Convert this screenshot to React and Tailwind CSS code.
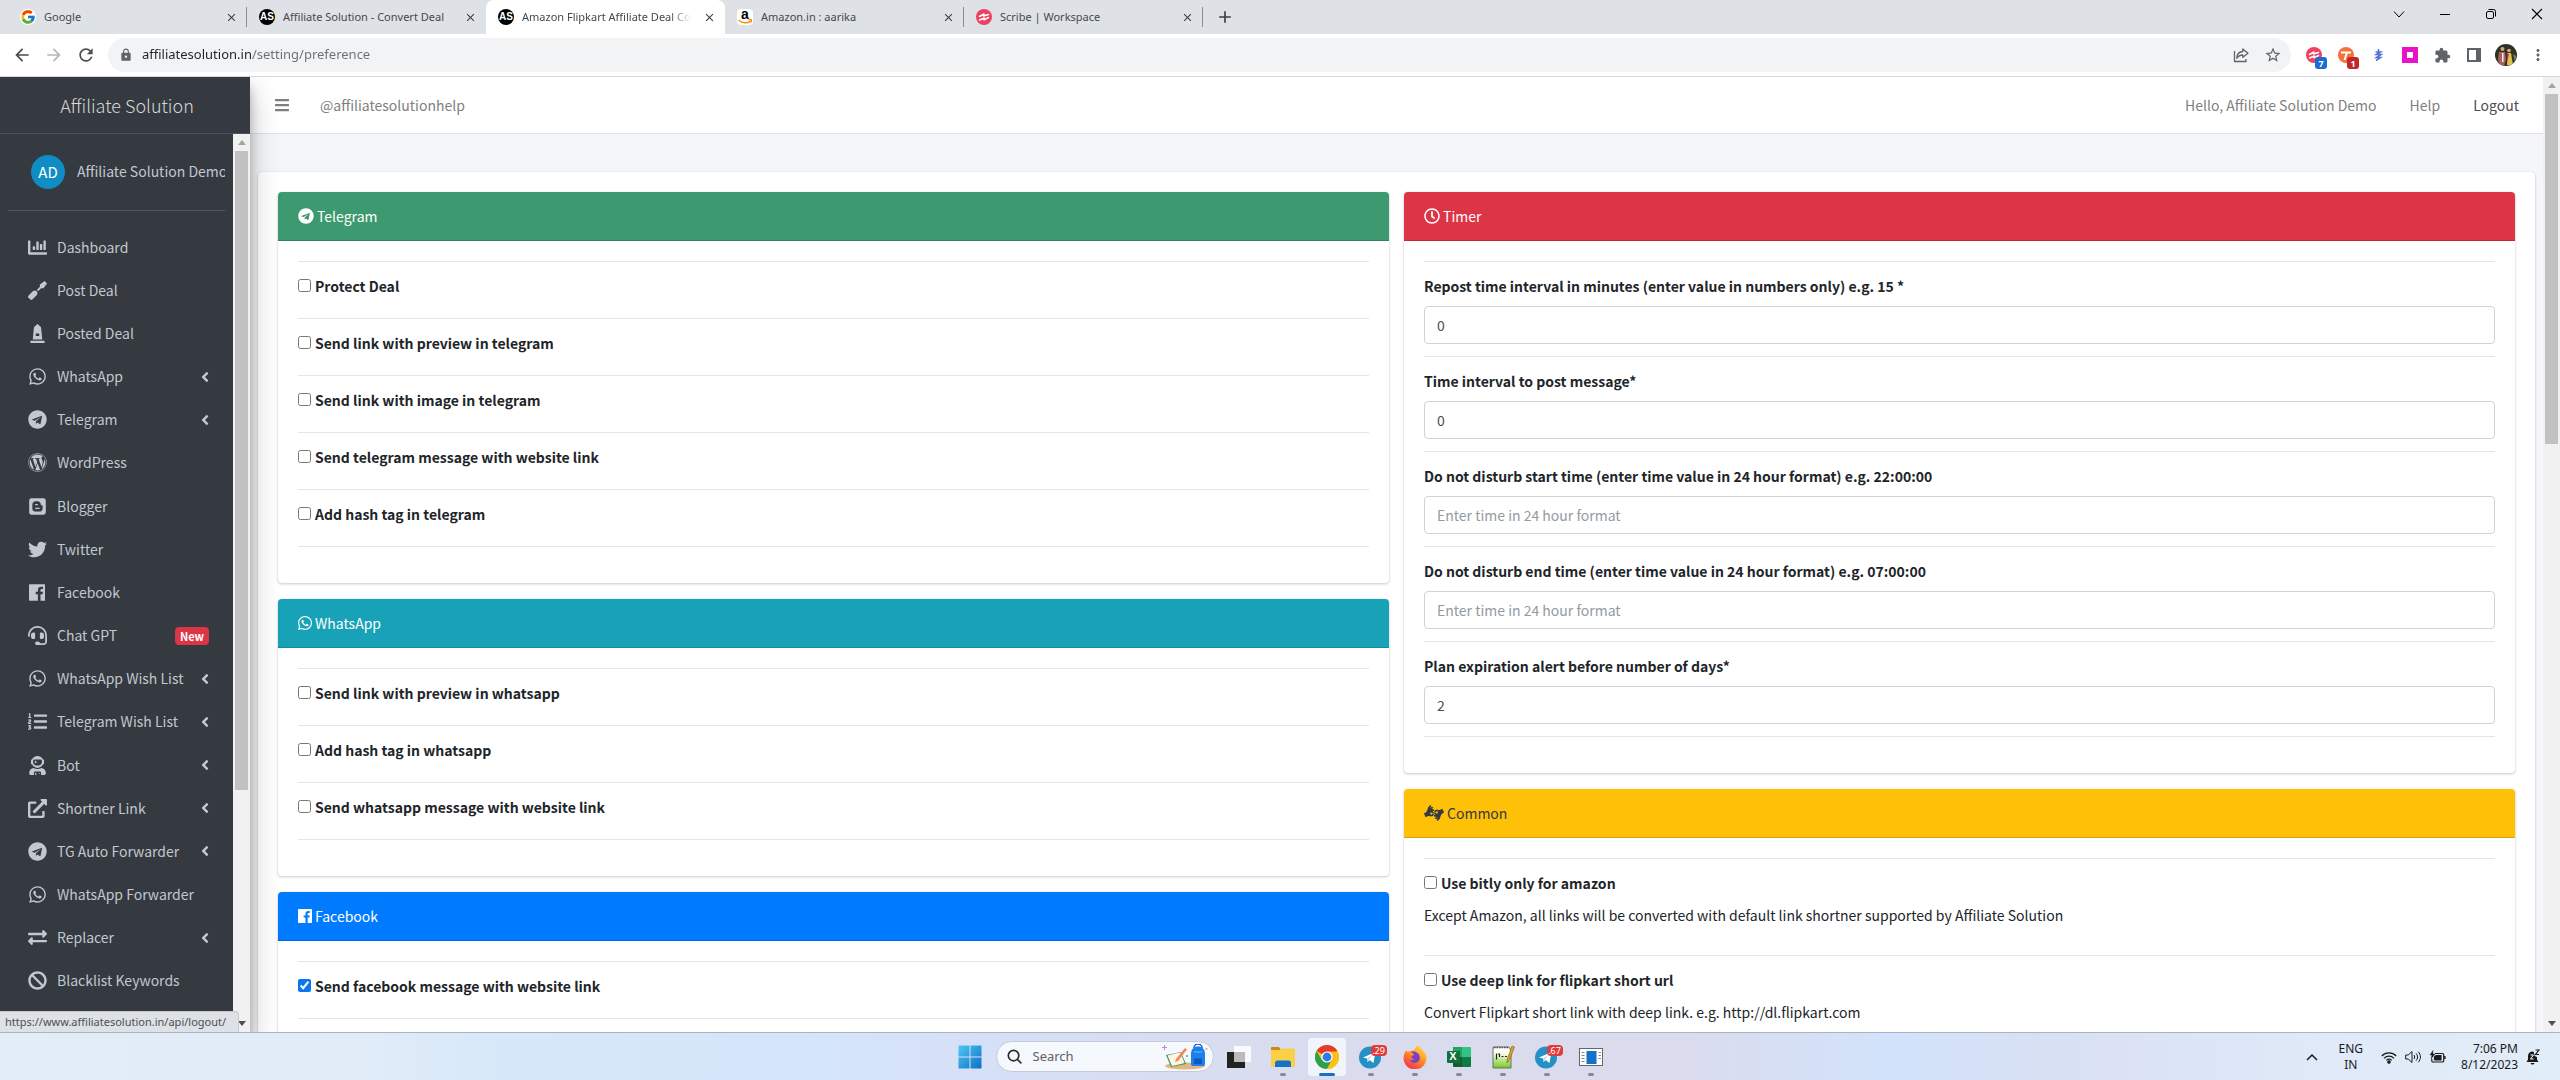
import {
  FaChartBar, FaScrewdriver, FaMonument, FaWhatsapp, FaTelegram, FaWordpress, FaBlogger, FaTwitter,
  FaListOl, FaUserAstronaut, FaExternalLinkAlt, FaExchangeAlt, FaBan, FaRegClock,
  FaAmericanSignLanguageInterpreting, FaHeadset, FaAngleLeft, FaBars,
} from "react-icons/fa";
import { FcGoogle } from "react-icons/fc";
import { MdArrowBack, MdArrowForward, MdRefresh, MdLock, MdStarBorder, MdExtension, MdMoreVert, MdClose, MdAdd } from "react-icons/md";

const UI = "font-['Noto_Sans',sans-serif]";
const PAGE = "font-['Noto_Sans_CJK_SC',sans-serif]";

/* ---------- Small drawings ---------- */

function FacebookBox({ className }) {
  return (
    <svg viewBox="0 0 448 512" fill="currentColor" className={className} aria-hidden="true">
      <path d="M448 56.7v398.5c0 13.7-11.1 24.7-24.7 24.7H309.1V306.5h58.2l8.7-67.6h-67v-43.2c0-19.6 5.4-32.9 33.5-32.9h35.8v-60.5c-6.2-.8-27.4-2.7-52.2-2.7-51.6 0-87 31.5-87 89.4v49.9h-58.4v67.6h58.4V480H24.7C11.1 480 0 468.9 0 455.3V56.7C0 43.1 11.1 32 24.7 32h398.5c13.7 0 24.8 11.1 24.8 24.7z" />
    </svg>
  );
}

function AsLogo() {
  return (
    <span className="flex size-4 items-center justify-center rounded-full bg-black font-['Liberation_Sans',sans-serif] text-[10px] leading-none font-bold text-white">
      AS
    </span>
  );
}

function AmazonLogo() {
  return (
    <span className="relative flex size-4 justify-center rounded-sm bg-white font-['Liberation_Sans',sans-serif] text-[14px] leading-[11px] font-bold text-black">
      a
      <svg viewBox="0 0 16 16" className="absolute inset-0 size-4" fill="none" stroke="#f79400" strokeWidth="1.5" strokeLinecap="round">
        <path d="M2 11.5c3.500 3 8.500 3 11.500.8M12 10.800h2.200v2" />
      </svg>
    </span>
  );
}

function ScribeLogo() {
  return (
    <svg viewBox="0 0 16 16" className="size-4" fill="none">
      <circle cx="8" cy="8" r="8" fill="#ee4060" />
      <path d="M3.500 7.500 8 5l-.5 2L12.500 5.500M3.500 11 8.300 9l-.3 1.800 4.500-2.300" stroke="#fff" strokeWidth="1.500" strokeLinecap="round" strokeLinejoin="round" />
    </svg>
  );
}

function ShareIcon() {
  return (
    <svg viewBox="0 0 16 16" className="size-4" fill="none" stroke="#5f6368" strokeWidth="1.300" strokeLinejoin="round">
      <path d="M1.500 4v10.500h11.500V12" />
      <path d="M9.800 2 15 6.200 9.800 10.300V8C7 8 5.200 9 3.800 11.200 4 7.500 6 4.700 9.800 4.500z" />
    </svg>
  );
}

function Arrow({ dir = "up", className }) {
  return (
    <svg viewBox="0 0 8 5" className={className} fill="currentColor" aria-hidden="true">
      <path d={dir === "up" ? "M4 0 8 5H0z" : "M0 0h8L4 5z"} />
    </svg>
  );
}

function WindowsLogo() {
  return (
    <svg viewBox="0 0 24 24" className="size-6">
      <defs>
        <linearGradient id="win" x1="0" y1="0" x2="1" y2="1">
          <stop offset="0" stopColor="#4cc8f4" />
          <stop offset="1" stopColor="#0f6fc6" />
        </linearGradient>
      </defs>
      <path fill="url(#win)" d="M1 .5h10.500V11.500H.5V1a.5.5 0 0 1 .5-.5zM12.500.5H23a.5.5 0 0 1 .5.5v10.500h-11zM.5 12.500h11v11H1a.5.5 0 0 1-.5-.5zM12.500 12.500h11V23a.5.5 0 0 1-.5.5H12.500z" />
    </svg>
  );
}

function SearchArt() {
  return (
    <svg viewBox="0 0 48 26" className="h-[26px] w-12">
      <ellipse cx="24" cy="22" rx="20" ry="3.500" fill="#e3b880" />
      <path d="M5 11 20 8l5 12-15 3z" fill="#3d9b62" />
      <path d="M6.500 11.500 14 9.500l4 11-7 1.500zM14 9.500l5.500-1 4 10.500-5.500 1.500z" fill="#fff4e4" />
      <path d="M15 15 24 4l2 1.500L17 17l-3 1z" fill="#ef8a58" />
      <path d="M2 3.500 3.500 2 5 3.500 3.500 5zM1 3h5v1H1zM3 1h1v5H3z" fill="#c084e8" />
      <circle cx="26" cy="12" r="1" fill="#39b57c" />
      <circle cx="45.500" cy="5" r="1" fill="#f59a5b" />
      <path d="M33 4a4 4 0 0 1 8 0" fill="none" stroke="#1b5fc4" strokeWidth="1.500" />
      <path d="M30 10c0-5 3-7.500 7-7.500S44 5 44 10v10c0 1.500-1 2-2 2H32c-1 0-2-.5-2-2z" fill="#1c80ea" />
      <path d="M33 14.500h8V20h-8z" fill="#0d59bd" />
      <path d="M33 8h8" stroke="#63b4ff" strokeWidth="1.200" />
    </svg>
  );
}

function TaskViewIcon() {
  return (
    <svg viewBox="0 0 24 24" className="size-6">
      <rect x="7" y="1" width="17" height="16" fill="#f8fafc" />
      <rect x="0" y="7" width="18" height="16" fill="#222" />
      <rect x="7" y="7" width="11" height="10" fill="#b9bbbd" />
    </svg>
  );
}

function FolderIcon() {
  return (
    <svg viewBox="0 0 24 24" className="size-6">
      <path d="M0 3c0-.6.4-1 1-1h7l2 3H0z" fill="#c98a11" />
      <path d="M0 5h9l2-1.500h12c.6 0 1 .4 1 1V21c0 .6-.4 1-1 1H1c-.6 0-1-.4-1-1z" fill="#fbcf48" />
      <path d="M4 22v-4c0-1.500 1-2.500 2.500-2.500h11C19 15.500 20 16.500 20 18v4z" fill="#1273c8" />
    </svg>
  );
}

function ChromeIcon() {
  return (
    <svg viewBox="0 0 24 24" className="size-6">
      <circle cx="12" cy="12" r="12" fill="#fbc116" />
      <path d="M12 12 1.600 6A12 12 0 0 1 22.400 6z" fill="#e33b2e" />
      <path d="M1.600 6A12 12 0 0 0 12 24l5.200-9L12 12 6.800 15z" fill="#2ba14b" />
      <path d="M12 6.500h10.700A12 12 0 0 1 12 24l4.800-9.200z" fill="#fbc116" />
      <circle cx="12" cy="12" r="5.600" fill="#fff" />
      <circle cx="12" cy="12" r="4.400" fill="#3079ed" />
    </svg>
  );
}

function TelegramIcon() {
  return (
    <svg viewBox="0 0 24 24" className="size-6">
      <circle cx="11" cy="12.500" r="11" fill="#2490c5" />
      <path d="M4 12.500 16.500 7l-2 11-4-3-1.800 2-.7-3.500z" fill="#fff" />
      <path d="m8 13.500 6-4-4.300 5-1 2.500z" fill="#b9d8ea" />
    </svg>
  );
}

function FirefoxIcon() {
  return (
    <svg viewBox="0 0 24 24" className="size-6">
      <defs>
        <linearGradient id="fx" x1=".8" y1="0" x2=".2" y2="1">
          <stop offset="0" stopColor="#ffe14a" />
          <stop offset=".5" stopColor="#ff8a25" />
          <stop offset="1" stopColor="#f02a58" />
        </linearGradient>
      </defs>
      <path d="M15 0c1 2 4 3.500 5.500 6C22 8 23.500 10 23.500 13a11.500 11.500 0 0 1-23 0C.5 9.500 2 7 3.500 5c0 1 .3 1.700.8 2C5.500 6 7 5.800 8 6c2-.5 3-1.500 4-1.800C12.500 2.500 13.500 1 15 0z" fill="url(#fx)" />
      <path d="M8 6.500c4-.5 8.500 1 8.800 6a5.300 5.300 0 0 1-10.300 1.800C8 15.500 10 15.500 11.500 14c-2 0-3-1-3-2.300 0-1 1.500-1.200 2.500-1.700 0-1.500-1.500-1.500-3-3.500z" fill="#7a3fc6" />
    </svg>
  );
}

function ExcelIcon() {
  return (
    <span className="relative flex size-6 items-center">
      <svg viewBox="0 0 24 24" className="absolute inset-0 size-6">
        <path d="M6 2h9v10H6z" fill="#21a366" />
        <path d="M15 2h8c.6 0 1 .4 1 1v9h-9z" fill="#33c481" />
        <path d="M6 12h9v10H7c-.6 0-1-.4-1-1z" fill="#185c37" />
        <path d="M15 12h9v9c0 .6-.4 1-1 1h-8z" fill="#107c41" />
        <rect y="6" width="13" height="12" rx="1" fill="#0f7039" />
      </svg>
      <span className="relative w-[13px] text-center font-['Liberation_Sans',sans-serif] text-[11px] leading-none font-bold text-white">X</span>
    </span>
  );
}

function NotepadIcon() {
  return (
    <svg viewBox="0 0 24 24" className="size-6">
      <defs>
        <linearGradient id="np" x1="0" y1="0" x2="0" y2="1">
          <stop offset=".3" stopColor="#fafdf2" />
          <stop offset="1" stopColor="#74c81f" />
        </linearGradient>
      </defs>
      <path d="M2 2h16l2 4v17H2z" fill="url(#np)" stroke="#6b6f66" />
      <path d="M3 2.500h15" stroke="#555" strokeWidth="1.500" strokeDasharray="1.500 1" />
      <path d="M5.500 14.500V8.500M7 9h1.500v3M10.500 11.500h2m1.500 0h2" stroke="#222" strokeWidth="1.200" fill="none" />
      <path d="M21 1l2.500 1-5 13-2.500 3V15z" fill="#dba32a" stroke="#7a5a1e" strokeWidth=".6" />
    </svg>
  );
}

function RunAppIcon() {
  return (
    <svg viewBox="0 0 24 24" className="size-6">
      <rect x=".5" y="3.500" width="23" height="17" fill="#fff" stroke="#666" />
      <rect x="7.500" y="6" width="10" height="13" fill="#1473c9" />
      <path d="M2.500 7.500h3M2.500 10.500h3M2.500 13.500h3M2.500 16.500h3M19.500 7.500h2.500M19.500 10.500h2.500M19.500 13.500h2.500" stroke="#888" />
    </svg>
  );
}

/* ---------- Browser frame ---------- */

const tabs = [
  { title: "Google", icon: <FcGoogle className="size-4 rounded-full bg-white" /> },
  { title: "Affiliate Solution - Convert Deal", icon: <AsLogo />, beforeActive: true },
  { title: "Amazon Flipkart Affiliate Deal Co", icon: <AsLogo />, active: true },
  { title: "Amazon.in : aarika", icon: <AmazonLogo /> },
  { title: "Scribe | Workspace", icon: <ScribeLogo /> },
];

function TabStrip() {
  return (
    <div className="flex h-[34px] shrink-0 bg-[#dee1e6] pl-2">
      {tabs.map((t) => (
        <div
          key={t.title}
          className={`flex w-[239px] min-w-0 items-center pr-2 pl-3 ${t.active ? "rounded-t-lg bg-white" : ""}`}
        >
          <button type="button" className="flex min-w-0 flex-1 items-center gap-2">
            {t.icon}
            <span
              className={`overflow-hidden text-[11px] leading-4 whitespace-nowrap text-[#45494d] ${t.active ? "[mask-image:linear-gradient(90deg,#000_88%,transparent)]" : ""}`}
            >
              {t.title}
            </span>
          </button>
          <button type="button" aria-label={`Close ${t.title}`} className="ml-2 text-[#3c4043]">
            <MdClose className="size-[13px]" />
          </button>
          <span className={`ml-2 -mr-2 h-5 w-px ${t.active || t.beforeActive ? "" : "bg-[#8a8d91]"}`} />
        </div>
      ))}
      <button type="button" aria-label="New tab" className="ml-3 text-[#3c4043]">
        <MdAdd className="size-5" />
      </button>
      <div className="ml-auto flex h-7 text-black">
        <button type="button" aria-label="Search tabs" className="flex w-[46px] items-center justify-center">
          <svg viewBox="0 0 12 12" className="size-3" fill="none" stroke="currentColor"><path d="m1 3.500 5 5.500 5-5.500" /></svg>
        </button>
        <button type="button" aria-label="Minimize" className="flex w-[46px] items-center justify-center">
          <svg viewBox="0 0 12 12" className="size-3" stroke="currentColor"><path d="M1 6.500h10" /></svg>
        </button>
        <button type="button" aria-label="Restore" className="flex w-[46px] items-center justify-center">
          <svg viewBox="0 0 12 12" className="size-3" fill="none" stroke="currentColor">
            <rect x="1.500" y="3.500" width="7" height="7" rx="1.500" /><path d="M3.500 1.500h5a2 2 0 0 1 2 2v5" />
          </svg>
        </button>
        <button type="button" aria-label="Close window" className="flex w-[46px] items-center justify-center">
          <svg viewBox="0 0 12 12" className="size-3" stroke="currentColor" strokeWidth="1.200"><path d="m1 1 10 10M11 1 1 11" /></svg>
        </button>
      </div>
    </div>
  );
}

function CountBadge({ className, children }) {
  return (
    <span className={`absolute flex items-center justify-center rounded-[3px] font-bold text-white ${className}`}>{children}</span>
  );
}

const slot = "relative flex h-8 w-8 items-center justify-center text-[#5f6368]";

function Toolbar() {
  return (
    <div className="flex h-[43px] shrink-0 items-center border-b border-[#d5d8db] bg-white pr-[6px] pl-3">
      <div className="flex gap-3 pr-3">
        <button type="button" aria-label="Back" className="text-[#4a4d51]"><MdArrowBack className="size-5" /></button>
        <button type="button" aria-label="Forward" className="text-[#b4b6b9]"><MdArrowForward className="size-5" /></button>
        <button type="button" aria-label="Reload" className="text-[#4a4d51]"><MdRefresh className="size-5" /></button>
      </div>
      <div className="flex h-[34px] min-w-0 flex-1 items-center rounded-full bg-[#f1f3f4] pr-[9px] pl-[11px]">
        <MdLock className="size-[14px] shrink-0 text-[#5f6368]" />
        <input
          aria-label="Address"
          defaultValue="affiliatesolution.in/setting/preference"
          className="ml-[9px] min-w-0 flex-1 bg-[linear-gradient(90deg,#202124_109px,#6b6f74_109px)] bg-clip-text text-[13px] text-transparent outline-none"
        />
        <button type="button" aria-label="Share" className="mr-[15px]"><ShareIcon /></button>
        <button type="button" aria-label="Bookmark"><MdStarBorder className="size-[18px] text-[#5f6368]" /></button>
      </div>
      <div className="ml-[7px] flex">
        <button type="button" aria-label="Scribe extension" className={slot}>
          <ScribeLogo />
          <CountBadge className="top-[18px] left-[17px] h-3 w-3 bg-[#1a6bd2] text-[9px] leading-none">7</CountBadge>
        </button>
        <button type="button" aria-label="Task extension" className={slot}>
          <svg viewBox="0 0 16 16" className="size-4"><circle cx="8" cy="8" r="8" fill="#f4713c" /><path d="M3 5.500h10M9 5.500 6.500 13" stroke="#fff" strokeWidth="2" /></svg>
          <CountBadge className="top-[18px] left-[17px] h-3 w-3 bg-[#c0282d] text-[9px] leading-none">1</CountBadge>
        </button>
        <button type="button" aria-label="Ribbon extension" className={slot}>
          <svg viewBox="0 0 16 16" className="size-4" fill="none" stroke="#5672d8" strokeWidth="1.600"><path d="M8.500 2v3M5.500 5h5l-4 2.500h4.500L6.500 10.500h4L6 13.500" /></svg>
        </button>
        <button type="button" aria-label="Frame extension" className={slot}>
          <span className="size-4 border-[5px] border-[#e813c8] bg-white" />
        </button>
        <button type="button" aria-label="Extensions" className={slot}><MdExtension className="size-[17px]" /></button>
        <button type="button" aria-label="Side panel" className={slot}>
          <span className="h-[14px] w-[14px] border-2 border-r-[5px] border-[#5f6368]" />
        </button>
        <button type="button" aria-label="Profile" className={slot}>
          <svg viewBox="0 0 22 22" className="size-[22px]">
            <clipPath id="face"><circle cx="11" cy="11" r="11" /></clipPath>
            <g clipPath="url(#face)">
              <rect width="22" height="22" fill="#2f3326" />
              <circle cx="7.500" cy="5" r="2" fill="#d9a584" /><circle cx="14" cy="6.500" r="1.800" fill="#dba888" />
              <path d="M4 8h6l1 7-2 7H5L3 15z" fill="#a9635c" /><path d="M7 9h1.500v9H7z" fill="#eee" />
              <path d="M12.500 9h3.500l2 12h-6z" fill="#e0bf4c" /><path d="M12 10l2 0-2 8z" fill="#b62b3c" />
              <path d="M18 10l3 2-1 6z" fill="#7e875c" />
            </g>
          </svg>
        </button>
        <button type="button" aria-label="Menu" className={slot}><MdMoreVert className="size-[18px]" /></button>
      </div>
    </div>
  );
}

function Scrollbar({ thumb }) {
  return (
    <div className="flex w-[17px] shrink-0 flex-col items-center bg-[#f1f1f1]">
      <span className="flex h-[17px] items-center"><Arrow className="w-2 text-[#a3a3a3]" /></span>
      <div className="flex min-h-0 flex-1 justify-center"><span className={`w-[13px] bg-[#c1c1c1] ${thumb}`} /></div>
      <span className="flex h-[17px] items-center"><Arrow dir="down" className="w-2 text-[#505050]" /></span>
    </div>
  );
}

/* ---------- Sidebar ---------- */

const nav = [
  ["Dashboard", FaChartBar], ["Post Deal", FaScrewdriver], ["Posted Deal", FaMonument],
  ["WhatsApp", FaWhatsapp, "sub"], ["Telegram", FaTelegram, "sub"], ["WordPress", FaWordpress],
  ["Blogger", FaBlogger], ["Twitter", FaTwitter], ["Facebook", FacebookBox],
  ["Chat GPT", FaHeadset, "new"], ["WhatsApp Wish List", FaWhatsapp, "sub"], ["Telegram Wish List", FaListOl, "sub"],
  ["Bot", FaUserAstronaut, "sub"], ["Shortner Link", FaExternalLinkAlt, "sub"], ["TG Auto Forwarder", FaTelegram, "sub"],
  ["WhatsApp Forwarder", FaWhatsapp], ["Replacer", FaExchangeAlt, "sub"], ["Blacklist Keywords", FaBan],
];

function Sidebar() {
  return (
    <aside className="relative z-10 flex w-[250px] shrink-0 flex-col bg-[#343a40] text-[#c2c7d0] shadow-[0_14px_28px_rgba(0,0,0,.25),0_10px_10px_rgba(0,0,0,.22)]">
      <a href="#home" className="flex h-[57px] shrink-0 items-center justify-center border-b border-[#4b545c] pl-1 text-[18px] leading-6 font-light text-[#d6d8d9]">
        Affiliate Solution
      </a>
      <div className="flex min-h-0 flex-1">
        <div className="min-w-0 flex-1 overflow-hidden px-2">
          <div className="flex h-[77px] items-center gap-3 overflow-hidden border-b border-[#4f5962] pl-[23px]">
            <span className="flex size-[34px] shrink-0 items-center justify-center rounded-full bg-[#0f8dc4] text-[15px] text-white">AD</span>
            <a href="#profile" className="pb-[2px] whitespace-nowrap">Affiliate Solution Demo</a>
          </div>
          <nav className="mt-4 flex h-[774px] flex-col justify-between">
            {nav.map(([label, Icon, extra]) => (
              <a key={label} href={`#${label}`} className="flex h-10 items-center pl-4 whitespace-nowrap">
                <span className="mr-[7px] flex w-[26px] justify-center"><Icon className="h-[19px] w-auto" /></span>
                {label}
                {extra === "sub" && <FaAngleLeft className="mr-3 ml-auto size-4" />}
                {extra === "new" && (
                  <span className="mr-4 ml-auto rounded bg-[#dc3545] px-[5px] text-[11px] leading-[18px] font-bold text-white">New</span>
                )}
              </a>
            ))}
          </nav>
        </div>
        <Scrollbar thumb="h-[74%]" />
      </div>
    </aside>
  );
}

/* ---------- Settings cards ---------- */

function Card({ title, icon, tone, children }) {
  return (
    <section className="overflow-hidden rounded bg-white shadow-[0_0_1px_rgba(0,0,0,.125),0_1px_3px_rgba(0,0,0,.2)]">
      <h3 className={`flex h-[49px] items-center gap-[3px] border-b border-black/15 px-5 ${tone}`}>
        {icon}
        {title}
      </h3>
      <div className="px-5 pt-5 pb-9">
        {children}
        <hr className="border-black/10" />
      </div>
    </section>
  );
}

function Check({ label, note, checked }) {
  return (
    <div className={`border-t border-black/10 pt-3 ${note ? "pb-7" : "pb-5"}`}>
      <label className="flex h-6 items-center gap-1 font-bold">
        <input type="checkbox" defaultChecked={checked} className="mb-px size-[13px] accent-[#0b76ef]" />
        {label}
      </label>
      {note && <p className="mt-2 leading-6">{note}</p>}
    </div>
  );
}

function Field({ label, value, placeholder }) {
  return (
    <div className="border-t border-black/10 py-3">
      <label className="block font-bold">
        <span className="mb-2 block h-6 leading-6">{label}</span>
        <input
          defaultValue={value}
          placeholder={placeholder}
          className="block h-[38px] w-full rounded border border-[#ced4da] bg-white px-3 font-normal text-[#495057] placeholder:text-[#939ba2]"
        />
      </label>
    </div>
  );
}

function Content() {
  return (
    <main className="min-h-0 flex-1 overflow-hidden bg-[#f4f6f9] px-2 pt-[38px]">
      <div className="grid grid-cols-2 items-start gap-[15px] rounded bg-white p-5 shadow-[0_0_1px_rgba(0,0,0,.125),0_1px_3px_rgba(0,0,0,.2)]">
        <div className="flex flex-col gap-4">
          <Card title="Telegram" icon={<FaTelegram className="size-4" />} tone="bg-[#3d9970] text-white">
            <Check label="Protect Deal" />
            <Check label="Send link with preview in telegram" />
            <Check label="Send link with image in telegram" />
            <Check label="Send telegram message with website link" />
            <Check label="Add hash tag in telegram" />
          </Card>
          <Card title="WhatsApp" icon={<FaWhatsapp className="h-4 w-[14px]" />} tone="bg-[#17a2b8] text-white">
            <Check label="Send link with preview in whatsapp" />
            <Check label="Add hash tag in whatsapp" />
            <Check label="Send whatsapp message with website link" />
          </Card>
          <Card title="Facebook" icon={<FacebookBox className="h-4 w-[14px]" />} tone="bg-[#007bff] text-white">
            <Check label="Send facebook message with website link" checked />
          </Card>
        </div>
        <div className="flex flex-col gap-4">
          <Card title="Timer" icon={<FaRegClock className="size-4" />} tone="bg-[#dc3545] text-white">
            <Field label="Repost time interval in minutes (enter value in numbers only) e.g. 15 *" value="0" />
            <Field label="Time interval to post message*" value="0" />
            <Field label="Do not disturb start time (enter time value in 24 hour format) e.g. 22:00:00" placeholder="Enter time in 24 hour format" />
            <Field label="Do not disturb end time (enter time value in 24 hour format) e.g. 07:00:00" placeholder="Enter time in 24 hour format" />
            <Field label="Plan expiration alert before number of days*" value="2" />
          </Card>
          <Card title="Common" icon={<FaAmericanSignLanguageInterpreting className="h-4 w-5" />} tone="bg-[#ffc107] text-[#343a40]">
            <Check
              label="Use bitly only for amazon"
              note="Except Amazon, all links will be converted with default link shortner supported by Affiliate Solution"
            />
            <Check label="Use deep link for flipkart short url" note="Convert Flipkart short link with deep link. e.g. http://dl.flipkart.com" />
          </Card>
        </div>
      </div>
    </main>
  );
}

function SitePage() {
  return (
    <div className={`relative flex min-h-0 flex-1 overflow-hidden text-[14px] text-[#212529] ${PAGE}`}>
      <Sidebar />
      <div className="flex min-w-0 flex-1 flex-col">
        <header className="flex h-[57px] shrink-0 items-center border-b border-[#dee2e6] bg-white pr-6 pl-6 text-[#7f7f7f]">
          <button type="button" aria-label="Toggle menu"><FaBars className="size-4" /></button>
          <a href="#help-channel" className="ml-[30px]">@affiliatesolutionhelp</a>
          <div className="ml-auto flex gap-[33px]">
            <a href="#me">Hello, Affiliate Solution Demo</a>
            <a href="#help">Help</a>
            <a href="#logout" className="text-[#4d4d4d]">Logout</a>
          </div>
        </header>
        <Content />
      </div>
      <Scrollbar thumb="h-[38%]" />
      <div className={`absolute bottom-0 left-0 z-20 h-[21px] w-[239px] rounded-tr border-t border-r border-[#c5c8ce] bg-[#dee1e6] pl-[5px] text-[11px] leading-5 whitespace-nowrap text-[#4c4f53] ${UI}`}>
        https://www.affiliatesolution.in/api/logout/
      </div>
    </div>
  );
}

/* ---------- Taskbar ---------- */

const apps = [
  { name: "Task view", icon: <TaskViewIcon />, idle: true },
  { name: "File Explorer", icon: <FolderIcon /> },
  { name: "Chrome", icon: <ChromeIcon />, active: true },
  { name: "Telegram", icon: <TelegramIcon />, count: ".29" },
  { name: "Firefox", icon: <FirefoxIcon /> },
  { name: "Excel", icon: <ExcelIcon /> },
  { name: "Notepad++", icon: <NotepadIcon /> },
  { name: "Telegram work", icon: <TelegramIcon />, count: ".67" },
  { name: "Program", icon: <RunAppIcon /> },
];

function Taskbar() {
  return (
    <footer className="grid h-12 shrink-0 grid-cols-[1fr_auto_1fr] items-center border-t border-[#a9b3c2] bg-[linear-gradient(90deg,#e3edf8_0%,#e1ecf8_14%,#d6e8f9_20%,#d5e5fa_32%,#d6dff5_40%,#dadcee_52%,#dadcee_66%,#d2e3fb_74%,#d8e0f3_80%,#e0e9f8_90%,#e1edf8_100%)] text-[#1b1b1b]">
      <span />
      <div className="flex items-center">
        <button type="button" aria-label="Start" className="flex w-11 justify-center"><WindowsLogo /></button>
        <label className="ml-1 flex h-[31px] w-[218px] items-center rounded-full border border-[#c3cbdb] bg-[#f5f8fd] pr-1 pl-[10px]">
          <svg viewBox="0 0 16 16" className="size-[15px] shrink-0" fill="none" stroke="#2c2c2c" strokeWidth="1.800" strokeLinecap="round">
            <circle cx="7" cy="7" r="5.600" /><path d="m11.200 11.200 3.600 3.600" />
          </svg>
          <input aria-label="Search" placeholder="Search" className="ml-[11px] min-w-0 flex-1 text-[13px] outline-none placeholder:text-[#5c6066]" />
          <SearchArt />
        </label>
        <div className="ml-[3px] flex">
          {apps.map((a) => (
            <button key={a.name} type="button" aria-label={a.name} className="flex w-11 justify-center">
              <span className={`relative flex h-[38px] w-[38px] items-center justify-center rounded ${a.active ? "bg-[#f2f4fb]" : ""}`}>
                {a.icon}
                {a.count && (
                  <span className="absolute top-[7px] left-[19px] flex h-[11px] w-4 items-center justify-center rounded-sm bg-[#e03c3a] text-[9px] leading-none text-white">
                    {a.count}
                  </span>
                )}
                {!a.idle && (
                  <span className={`absolute bottom-0 h-[3px] rounded-full ${a.active ? "w-4 bg-[#1a6fc4]" : "w-[6px] bg-[#85889a]"}`} />
                )}
              </span>
            </button>
          ))}
        </div>
      </div>
      <div className="flex items-center justify-end pr-5 text-[12px] leading-4">
        <button type="button" aria-label="Hidden icons">
          <svg viewBox="0 0 12 8" className="h-2 w-3" fill="none" stroke="currentColor" strokeWidth="1.500"><path d="m1 7 5-5 5 5" /></svg>
        </button>
        <button type="button" className="ml-5 text-center">ENG<br />IN</button>
        <button type="button" aria-label="Network, volume and battery" className="ml-[18px] flex items-center gap-2">
          <svg viewBox="0 0 16 14" className="h-[14px] w-4" fill="none" stroke="currentColor" strokeWidth="1.200">
            <path d="M.8 6A10 10 0 0 1 15.200 6M3 8.300a7 7 0 0 1 10 0M5.300 10.400a4 4 0 0 1 5.400 0" /><circle cx="8" cy="12" r="1.200" fill="currentColor" />
          </svg>
          <svg viewBox="0 0 16 14" className="h-[14px] w-4" fill="none" stroke="currentColor">
            <path d="M.7 5v4h2.500L7 12.500v-11L3.200 5zM9 5c.8 1 .8 3 0 4M11 3.300c2 2 2 5.400 0 7.400M13.200 1.700c3 3 3 7.600 0 10.600" />
          </svg>
          <svg viewBox="0 0 17 14" className="h-[14px] w-[17px]" fill="none" stroke="currentColor" strokeWidth="1.200">
            <path d="M6 3.500h7.500c.8 0 1.200.5 1.200 1.200v6c0 .7-.4 1.300-1.200 1.300H4c-.8 0-1.200-.6-1.200-1.300V9M16 6v3" /><path d="M5.500 9.500V7L7 5.500h5v4.500h-6z" fill="currentColor" /><path d="M4 .5 1 5h2L2 9l4-5H3.800z" fill="currentColor" strokeWidth=".4" />
          </svg>
        </button>
        <button type="button" className="ml-[15px] text-right">7:06 PM<br />8/12/2023</button>
        <button type="button" aria-label="Notifications" className="ml-2">
          <svg viewBox="0 0 14 16" className="h-4 w-[14px]">
            <path d="M6.500 2.500A4.500 4.500 0 0 0 2 7v3.500L.5 13h12L11 10.500V8A4 4 0 0 1 8 3z" fill="currentColor" /><path d="M4.500 14h4c-.5 2-3.500 2-4 0z" fill="currentColor" />
            <path d="M4.500 6h3L4.500 10h3" stroke="#fff" fill="none" /><path d="M9.500 1h3.500L9.500 5.500H13" stroke="currentColor" strokeWidth="1.200" fill="none" />
          </svg>
        </button>
      </div>
    </footer>
  );
}

export default function App() {
  return (
    <div className={`flex h-screen flex-col overflow-hidden bg-white ${UI}`}>
      <TabStrip />
      <Toolbar />
      <SitePage />
      <Taskbar />
    </div>
  );
}
